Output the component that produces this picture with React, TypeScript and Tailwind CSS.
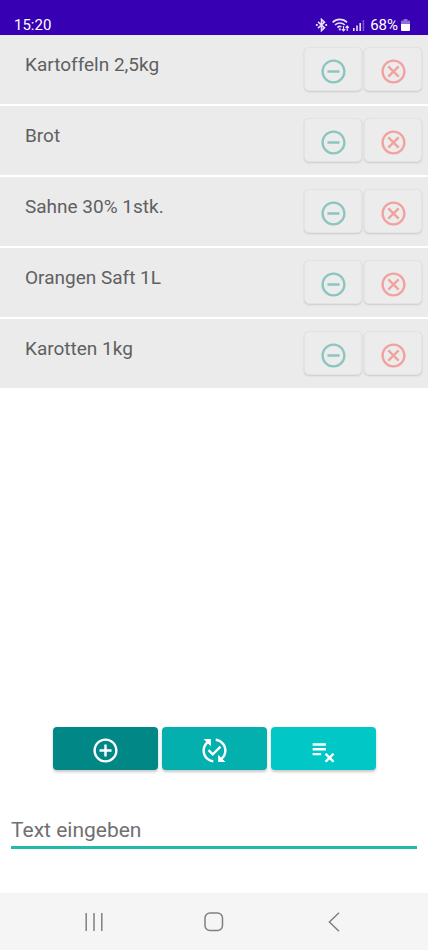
import { useState } from "react";
import {
  MdAddCircleOutline,
  MdOutlineCancel,
  MdPlaylistRemove,
  MdPublishedWithChanges,
  MdRemoveCircleOutline,
} from "react-icons/md";

const START_ITEMS = [
  "Kartoffeln 2,5kg",
  "Brot",
  "Sahne 30% 1stk.",
  "Orangen Saft 1L",
  "Karotten 1kg",
];

function StatusBar() {
  return (
    <header className="flex h-[35px] items-end justify-between bg-[#3700b3] pr-[18px] pl-[14px] text-white">
      <span className="text-[15px] leading-5">15:20</span>
      <div className="flex items-center">
        <svg width="13" height="14" viewBox="0 0 12 14" fill="none" stroke="#e6dcf8" strokeWidth="1.6" aria-hidden="true">
          <path d="M2.5 3.8 9 9.8 6 12.6V1.4L9 4.2 2.5 10.2" />
          <path d="M.4 7h1.8M9.8 7h1.8" strokeWidth="2" />
        </svg>
        <svg className="ml-1" width="18" height="14" viewBox="0 0 18 14" fill="none" stroke="#e6dcf8" strokeWidth="1.7" aria-hidden="true">
          <path d="M.6 4.4a10.3 10.3 0 0 1 14.4 0M3 7a7 7 0 0 1 9.8 0M5.4 9.6a3.7 3.7 0 0 1 4-.9" />
          <circle cx="7.8" cy="11.4" r="1.1" fill="#e6dcf8" stroke="none" />
          <path d="M11.5 8v5M9.8 11.2l1.7 1.8 1.7-1.8M15.2 13V8M13.6 9.8 15.2 8l1.7 1.8" strokeWidth="1.2" />
        </svg>
        <svg className="ml-[3px]" width="12" height="14" viewBox="0 0 12 14" aria-hidden="true">
          <path d="M0 10h1.6v3H0zM3.2 7.6h1.6V13H3.2zM6.4 5H8v8H6.4z" fill="#e6dcf8" />
          <path d="M9.6 2h1.6v11H9.6z" fill="#7a55cc" />
        </svg>
        <span className="ml-[5px] text-[15px] leading-5">68%</span>
        <svg className="ml-[3px]" width="9" height="14" viewBox="0 0 9 14" aria-hidden="true">
          <path d="M2.6 1h3.8v1.6H8a1 1 0 0 1 1 1V6H0V3.6a1 1 0 0 1 1-1h1.6z" fill="#8f6ed6" />
          <path d="M0 6h9v6a1 1 0 0 1-1 1H1a1 1 0 0 1-1-1z" fill="#fff" />
        </svg>
      </div>
    </header>
  );
}

function ItemRow({ name, onRemove }: { name: string; onRemove: () => void }) {
  const button =
    "flex h-11 w-[58px] items-center justify-center rounded-[5px] border border-[#e3e3e3] bg-[#ececec] pt-1 shadow-[0_1px_2px_rgba(0,0,0,0.14)]";
  return (
    <li className="flex h-[69px] items-start justify-between bg-[#ebebeb] pt-3 pr-[6px] pl-[25px]">
      <span className="text-[19px] leading-9 text-[#606060]">{name}</span>
      <div className="flex gap-[2px]">
        <button type="button" aria-label={`${name} reduzieren`} className={`${button} text-[#8ac6bf]`}>
          <MdRemoveCircleOutline size={29} />
        </button>
        <button type="button" aria-label={`${name} entfernen`} onClick={onRemove} className={`${button} text-[#f1a29e]`}>
          <MdOutlineCancel size={29} />
        </button>
      </div>
    </li>
  );
}

function NavigationBar() {
  return (
    <nav className="flex h-[57px] items-center justify-between bg-[#f5f5f5] px-[80px] text-[#808080]">
      <button type="button" aria-label="Letzte Apps" className="flex w-7 justify-center">
        <svg width="20" height="20" viewBox="0 0 20 20" stroke="currentColor" strokeWidth="1.5" aria-hidden="true">
          <path d="M2.2 1v18M10 1v18M17.8 1v18" />
        </svg>
      </button>
      <button type="button" aria-label="Startseite" className="flex w-7 justify-center">
        <svg width="20" height="20" viewBox="0 0 20 20" fill="none" stroke="currentColor" strokeWidth="1.5" aria-hidden="true">
          <rect x="1" y="1" width="17.5" height="17.5" rx="5" />
        </svg>
      </button>
      <button type="button" aria-label="Zurück" className="flex w-7 justify-center">
        <svg width="20" height="20" viewBox="0 0 20 20" fill="none" stroke="currentColor" strokeWidth="1.5" aria-hidden="true">
          <path d="M15 .8 5.4 10l9.6 9.2" />
        </svg>
      </button>
    </nav>
  );
}

export default function App() {
  const [items, setItems] = useState(START_ITEMS);
  const [text, setText] = useState("");

  const addItem = () => {
    if (!text.trim()) return;
    setItems((list) => [...list, text.trim()]);
    setText("");
  };

  const action =
    "flex h-[43px] w-[105px] items-center justify-center rounded-[4px] pt-1 text-white shadow-[0_2px_3px_rgba(0,0,0,0.22)]";

  return (
    <div className="flex min-h-screen flex-col bg-white font-[Roboto,sans-serif]">
      <StatusBar />
      <ul className="flex flex-col gap-[2px]">
        {items.map((name) => (
          <ItemRow key={name} name={name} onRemove={() => setItems((list) => list.filter((i) => i !== name))} />
        ))}
      </ul>

      <div className="mt-auto flex justify-center gap-1">
        <button type="button" aria-label="Hinzufügen" onClick={addItem} className={`${action} bg-[#018786]`}>
          <MdAddCircleOutline size={29} />
        </button>
        <button type="button" aria-label="Aktualisieren" className={`${action} bg-[#03b0ae]`}>
          <MdPublishedWithChanges size={29} />
        </button>
        <button type="button" aria-label="Liste leeren" onClick={() => setItems([])} className={`${action} bg-[#02c7c7]`}>
          <MdPlaylistRemove size={29} />
        </button>
      </div>

      <div className="px-[11px] pt-[41px] pb-11">
        <input
          type="text"
          aria-label="Text eingeben"
          placeholder="Text eingeben"
          value={text}
          onChange={(e) => setText(e.target.value)}
          className="block h-[38px] w-full border-b-[3px] border-[#25b9ad] pt-[2px] text-[21px] text-[#4c4c4c] outline-none placeholder:text-[#707070]"
        />
      </div>
      <NavigationBar />
    </div>
  );
}
